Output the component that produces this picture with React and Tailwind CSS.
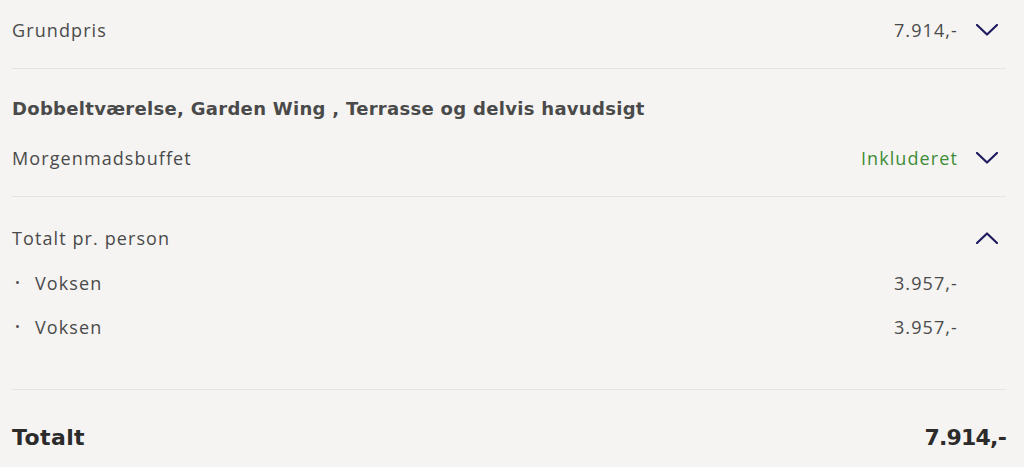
import React from "react";

function Chevron({ up }) {
  return (
    <svg width="22" height="12" viewBox="0 0 22 12" fill="none" className="shrink-0">
      <path
        d={up ? "M1 11 L11 1.5 L21 11" : "M1 1 L11 10.5 L21 1"}
        stroke="#1f1b5e"
        strokeWidth="2.2"
        strokeLinecap="round"
        strokeLinejoin="round"
      />
    </svg>
  );
}

function Row({ label, value, valueClass = "text-[#4a4a4a]", chevron, bullet }) {
  return (
    <div className="flex items-center h-6">
      <div className="flex-1 flex items-center">
        {bullet && <span className="w-[23px] text-[13px] pl-[3px]">•</span>}
        <span>{label}</span>
      </div>
      <span className={valueClass}>{value}</span>
      <div className="w-[22px] ml-[18px] mr-[8px] flex justify-center">
        {chevron && <Chevron up={chevron === "up"} />}
      </div>
    </div>
  );
}

export default function App() {
  return (
    <div
      className="w-[1024px] h-[467px] bg-[#f5f4f2] text-[#4a4a4a] text-[18px] tracking-[1.1px] pl-3 pr-[18px] overflow-hidden"
      style={{ fontFamily: "'Open Sans', 'Noto Sans', sans-serif" }}
    >
      <div className="h-[69px] border-b border-[#e6e4e1] pt-[18px]">
        <Row label="Grundpris" value="7.914,-" chevron="down" />
      </div>
      <div className="border-b border-[#e6e4e1] pt-[27px] pb-[26px]">
        <div
          className="h-6 flex items-center font-bold tracking-[0.3px]"
          style={{ fontFamily: "'DejaVu Sans', sans-serif" }}
        >
          Dobbeltværelse, Garden Wing , Terrasse og delvis havudsigt
        </div>
        <div className="mt-[26px]">
          <Row
            label="Morgenmadsbuffet"
            value="Inkluderet"
            valueClass="text-[#3e8d36]"
            chevron="down"
          />
        </div>
      </div>
      <div className="border-b border-[#e6e4e1] pt-[29px] pb-[50px]">
        <Row label="Totalt pr. person" value="" chevron="up" />
        <div className="mt-[21px]">
          <Row label="Voksen" value="3.957,-" bullet />
        </div>
        <div className="mt-[20px]">
          <Row label="Voksen" value="3.957,-" bullet />
        </div>
      </div>
      <div
        className="pt-[34px] flex items-center h-[62px] justify-between text-[22px] font-bold text-[#2b2b2b]"
        style={{ fontFamily: "'DejaVu Sans', sans-serif" }}
      >
        <span className="leading-7 tracking-[0.4px]">Totalt</span>
        <span className="leading-7 tracking-[-0.8px]">7.914,-</span>
      </div>
    </div>
  );
}
